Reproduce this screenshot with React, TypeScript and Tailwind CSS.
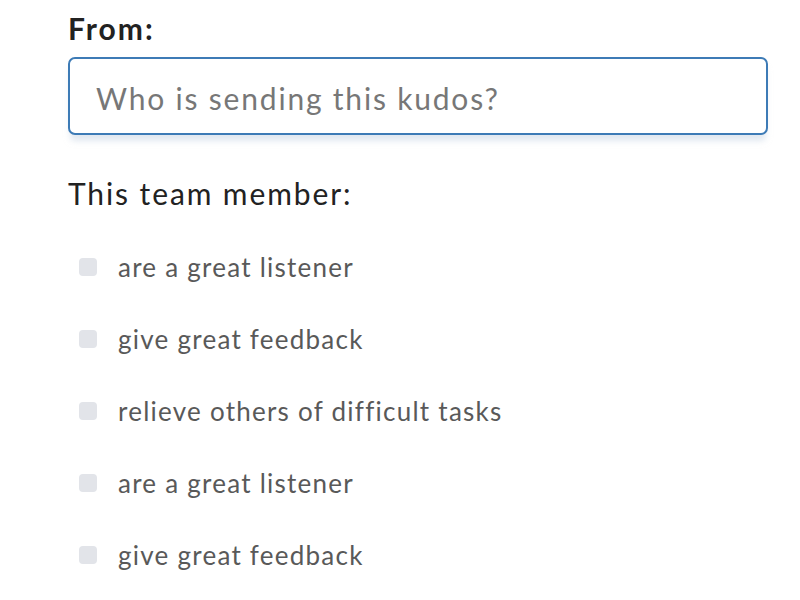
const options = [
  "are a great listener",
  "give great feedback",
  "relieve others of difficult tasks",
  "are a great listener",
  "give great feedback",
];

const KudosForm = () => {
  return (
    <div className="h-[600px] w-[800px] overflow-hidden bg-white pl-[68px] pr-[32px] font-['Lato',sans-serif]">
      <label className="block pt-[10px] text-[30px] font-bold leading-[36px] tracking-[2px] text-[#222]">
        From:
      </label>
      <div className="mt-[11px] h-[78px] rounded-[7px] border-2 border-[#3d7bb6] bg-white shadow-[0_8px_6px_-2px_rgba(200,214,228,0.55)]">
        <input
          type="text"
          placeholder="Who is sending this kudos?"
          className="h-full w-full rounded-[7px] bg-transparent px-[26px] pt-[3px] text-[30px] tracking-[1.8px] text-[#333] outline-none placeholder:text-[#777]"
        />
      </div>
      <p className="mt-[38px] text-[30px] leading-[40px] tracking-[1.9px] text-[#222]">
        This team member:
      </p>
      <ul className="mt-[38px] flex flex-col gap-[40px] pl-[11px]">
        {options.map((option, i) => (
          <li key={i} className="flex h-[32px] items-center gap-[21px]">
            <span className="h-[18px] w-[18px] shrink-0 rounded-[4px] bg-[#e2e4e9]" />
            <span className="text-[26px] leading-[32px] tracking-[1.25px] text-[#595959]">{option}</span>
          </li>
        ))}
      </ul>
    </div>
  );
};

export default function App() {
  return <KudosForm />;
}
